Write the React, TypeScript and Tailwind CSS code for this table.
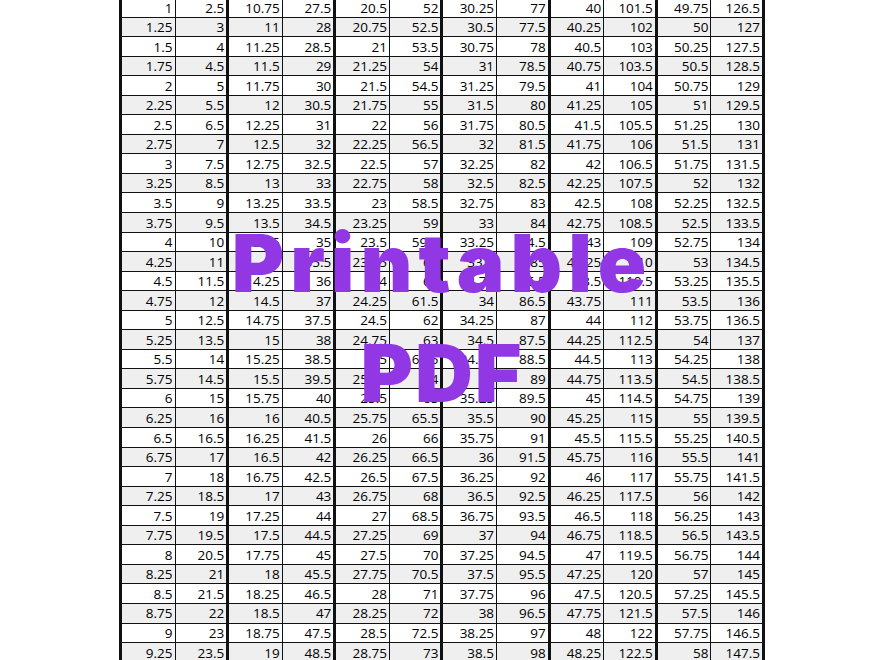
const col1 = Array.from({ length: 34 }, (_, i) => 1 + i * 0.25)
const col2 = [2.5, 3, 4, 4.5, 5, 5.5, 6.5, 7, 7.5, 8.5, 9, 9.5, 10, 11, 11.5, 12, 12.5, 13.5, 14, 14.5, 15, 16, 16.5, 17, 18, 18.5, 19, 19.5, 20.5, 21, 21.5, 22, 23, 23.5]
const col3 = Array.from({ length: 34 }, (_, i) => 10.75 + i * 0.25)
const col4 = [27.5, 28, 28.5, 29, 30, 30.5, 31, 32, 32.5, 33, 33.5, 34.5, 35, 35.5, 36, 37, 37.5, 38, 38.5, 39.5, 40, 40.5, 41.5, 42, 42.5, 43, 44, 44.5, 45, 45.5, 46.5, 47, 47.5, 48.5]
const col5 = Array.from({ length: 34 }, (_, i) => 20.5 + i * 0.25)
const col6 = [52, 52.5, 53.5, 54, 54.5, 55, 56, 56.5, 57, 58, 58.5, 59, 59.5, 60, 61, 61.5, 62, 63, 63.5, 64, 65, 65.5, 66, 66.5, 67.5, 68, 68.5, 69, 70, 70.5, 71, 72, 72.5, 73]
const col7 = Array.from({ length: 34 }, (_, i) => 30.25 + i * 0.25)
const col8 = [77, 77.5, 78, 78.5, 79.5, 80, 80.5, 81.5, 82, 82.5, 83, 84, 84.5, 85, 85.5, 86.5, 87, 87.5, 88.5, 89, 89.5, 90, 91, 91.5, 92, 92.5, 93.5, 94, 94.5, 95.5, 96, 96.5, 97, 98]
const col9 = Array.from({ length: 34 }, (_, i) => 40 + i * 0.25)
const col10 = [101.5, 102, 103, 103.5, 104, 105, 105.5, 106, 106.5, 107.5, 108, 108.5, 109, 110, 110.5, 111, 112, 112.5, 113, 113.5, 114.5, 115, 115.5, 116, 117, 117.5, 118, 118.5, 119.5, 120, 120.5, 121.5, 122, 122.5]
const col11 = Array.from({ length: 34 }, (_, i) => 49.75 + i * 0.25)
const col12 = [126.5, 127, 127.5, 128.5, 129, 129.5, 130, 131, 131.5, 132, 132.5, 133.5, 134, 134.5, 135.5, 136, 136.5, 137, 138, 138.5, 139, 139.5, 140.5, 141, 141.5, 142, 143, 143.5, 144, 145, 145.5, 146, 146.5, 147.5]

const columns = [col1, col2, col3, col4, col5, col6, col7, col8, col9, col10, col11, col12]
const rows = col1.map((_, r) => columns.map((c) => c[r]))

export default function App() {
  return (
    <div className="relative h-[660px] w-[880px] overflow-hidden bg-white">
      <div
        className="ml-[119px] mt-[-2px] w-[646px] border-l-[3px] border-[#111]"
        style={{ fontFamily: '"Open Sans", "Liberation Sans", sans-serif' }}
      >
        {rows.map((row, r) => (
          <div
            key={r}
            className={`grid h-[19.55px] grid-cols-12 border-b-[1.5px] border-[#111] ${r % 2 === 1 ? 'bg-[#efefef]' : 'bg-white'}`}
          >
            {row.map((v, c) => (
              <div
                key={c}
                className={`flex items-center justify-end pr-[2px] pt-[2px] text-[13.5px] leading-none text-black border-[#111] ${c % 2 === 1 ? 'border-r-[3px]' : 'border-r-[1.5px]'}`}
              >
                {v}
              </div>
            ))}
          </div>
        ))}
      </div>

      <div
        className="absolute left-[120px] top-[208px] flex w-[644px] flex-col items-center text-[80px] font-black leading-[110px] text-[#9138e4]"
        style={{ fontFamily: 'Inter, "Open Sans", sans-serif' }}
      >
        <span className="tracking-[6px]">Printable</span>
        <span className="tracking-[2px]">PDF</span>
      </div>
    </div>
  )
}
